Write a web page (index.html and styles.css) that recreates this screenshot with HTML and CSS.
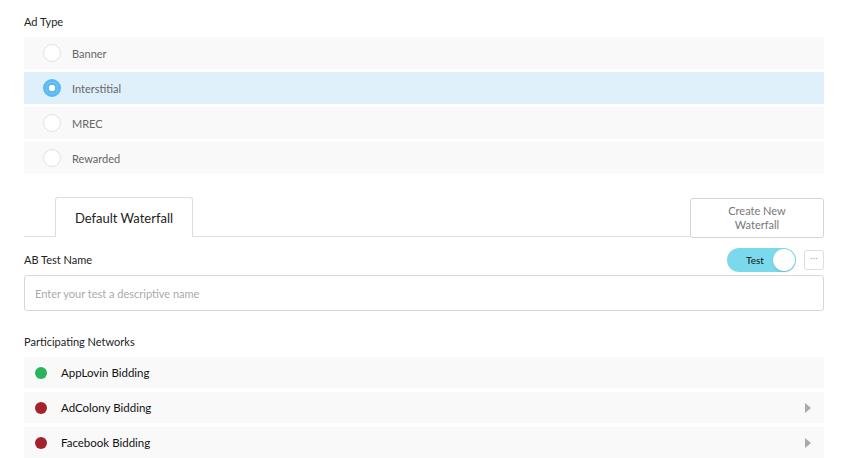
FILE: index.html
```html
<!DOCTYPE html>
<html lang="en">
<head>
  <meta charset="UTF-8" />
  <meta name="viewport" content="width=device-width, initial-scale=1.0"/>
  <title>Ad Unit Waterfall</title>
  <link rel="stylesheet" href="styles.css">
</head>
<body>
  <div class="page">
    <div class="label">Ad Type</div>
    <div class="options">
      <div class="option"><span class="radio"></span>Banner</div>
      <div class="option selected"><span class="radio"></span>Interstitial</div>
      <div class="option"><span class="radio"></span>MREC</div>
      <div class="option"><span class="radio"></span>Rewarded</div>
    </div>

    <div class="tabs">
      <div class="tab-line">
        <div class="tab">Default Waterfall</div>
      </div>
      <button class="create-btn">Create New<br>Waterfall</button>
    </div>

    <div class="ab-head">
      <div class="label">AB Test Name</div>
      <div class="ab-controls">
        <div class="toggle"><span>Test</span><span class="knob"></span></div>
        <button class="more">&middot;&middot;&middot;</button>
      </div>
    </div>
    <input class="name-input" type="text" placeholder="Enter your test a descriptive name">

    <div class="label networks-label">Participating Networks</div>
    <div class="networks">
      <div class="network"><span class="dot green"></span>AppLovin Bidding</div>
      <div class="network"><span class="dot red"></span>AdColony Bidding<span class="arrow"></span></div>
      <div class="network"><span class="dot red"></span>Facebook Bidding<span class="arrow"></span></div>
    </div>
  </div>
</body>
</html>
```

FILE: styles.css
```css
body {
  font-family: Lato, "Open Sans", sans-serif;
  margin: 0;
  background: #fff;
  color: #222;
}

.page {
  padding: 15px 21px 0 24px;
}

.label {
  font-size: 11px;
  color: #222;
  line-height: 14px;
}

.options {
  display: flex;
  flex-direction: column;
  gap: 3px;
  margin-top: 8px;
}

.option {
  display: flex;
  align-items: center;
  height: 32px;
  background: #f9f9f9;
  font-size: 11px;
  color: #666;
  padding-left: 19px;
}

.option.selected {
  background: #dff0fb;
}

.radio {
  width: 16px;
  height: 16px;
  border: 1px solid #e2e2e2;
  border-radius: 50%;
  background: #fff;
  margin-right: 11px;
  box-sizing: content-box;
}

.selected .radio {
  width: 12px;
  height: 12px;
  border: 3px solid #5ab9f2;
  background: #fff;
  box-shadow: 0 0 0 3px #5ab9f2 inset;
  position: relative;
}

.selected .radio::after {
  content: "";
  position: absolute;
  left: 3px;
  top: 3px;
  width: 6px;
  height: 6px;
  border-radius: 50%;
  background: #fff;
}

.tabs {
  display: flex;
  align-items: flex-end;
  margin-top: 23px;
}

.tab-line {
  flex: 1;
  border-bottom: 1px solid #ddd;
  padding-left: 31px;
  display: flex;
}

.tab {
  width: 136px;
  height: 39px;
  border: 1px solid #ddd;
  border-bottom: none;
  border-radius: 3px 3px 0 0;
  font-size: 13px;
  color: #222;
  display: flex;
  align-items: center;
  justify-content: center;
  background: #fff;
  margin-bottom: -1px;
}

.create-btn {
  width: 134px;
  height: 40px;
  border: 1px solid #d4d4d4;
  border-radius: 3px;
  background: #fff;
  font-family: inherit;
  font-size: 11px;
  line-height: 14px;
  color: #777;
  margin-bottom: -1px;
}

.ab-head {
  display: flex;
  justify-content: space-between;
  align-items: center;
  margin-top: 11px;
  height: 24px;
}

.ab-controls {
  display: flex;
  align-items: center;
  gap: 8px;
}

.toggle {
  width: 69px;
  height: 24px;
  border-radius: 12px;
  background: #7ad9ec;
  display: flex;
  align-items: center;
  justify-content: space-between;
  padding-left: 19px;
  box-sizing: border-box;
  font-size: 10px;
  color: #111;
}

.knob {
  width: 22px;
  height: 22px;
  border-radius: 50%;
  background: #fff;
  margin-right: 1px;
  box-shadow: 0 1px 2px rgba(0,0,0,0.15);
}

.more {
  width: 20px;
  height: 20px;
  border: 1px solid #ddd;
  border-radius: 3px;
  background: #fff;
  color: #888;
  font-family: "DejaVu Sans", sans-serif;
  font-size: 8px;
  line-height: 18px;
  padding: 0;
  letter-spacing: 0;
}

.name-input {
  display: block;
  width: 100%;
  height: 36px;
  box-sizing: border-box;
  border: 1px solid #d8d8d8;
  border-radius: 3px;
  margin-top: 3px;
  padding: 0 10px;
  font-family: inherit;
  font-size: 11px;
}

.name-input::placeholder {
  color: #aaa;
}

.networks-label {
  margin-top: 24px;
}

.networks {
  display: flex;
  flex-direction: column;
  gap: 4px;
  margin-top: 8px;
}

.network {
  display: flex;
  align-items: center;
  height: 31px;
  background: #f9f9f9;
  font-size: 11.5px;
  color: #111;
  padding-left: 11px;
  position: relative;
}

.dot {
  width: 12px;
  height: 12px;
  border-radius: 50%;
  margin-right: 14px;
}

.dot.green {
  background: #29b45c;
}

.dot.red {
  background: #a3222b;
}

.arrow {
  position: absolute;
  right: 13px;
  top: 11px;
  width: 0;
  height: 0;
  border-top: 5px solid transparent;
  border-bottom: 5px solid transparent;
  border-left: 6px solid #aaa;
}
```
